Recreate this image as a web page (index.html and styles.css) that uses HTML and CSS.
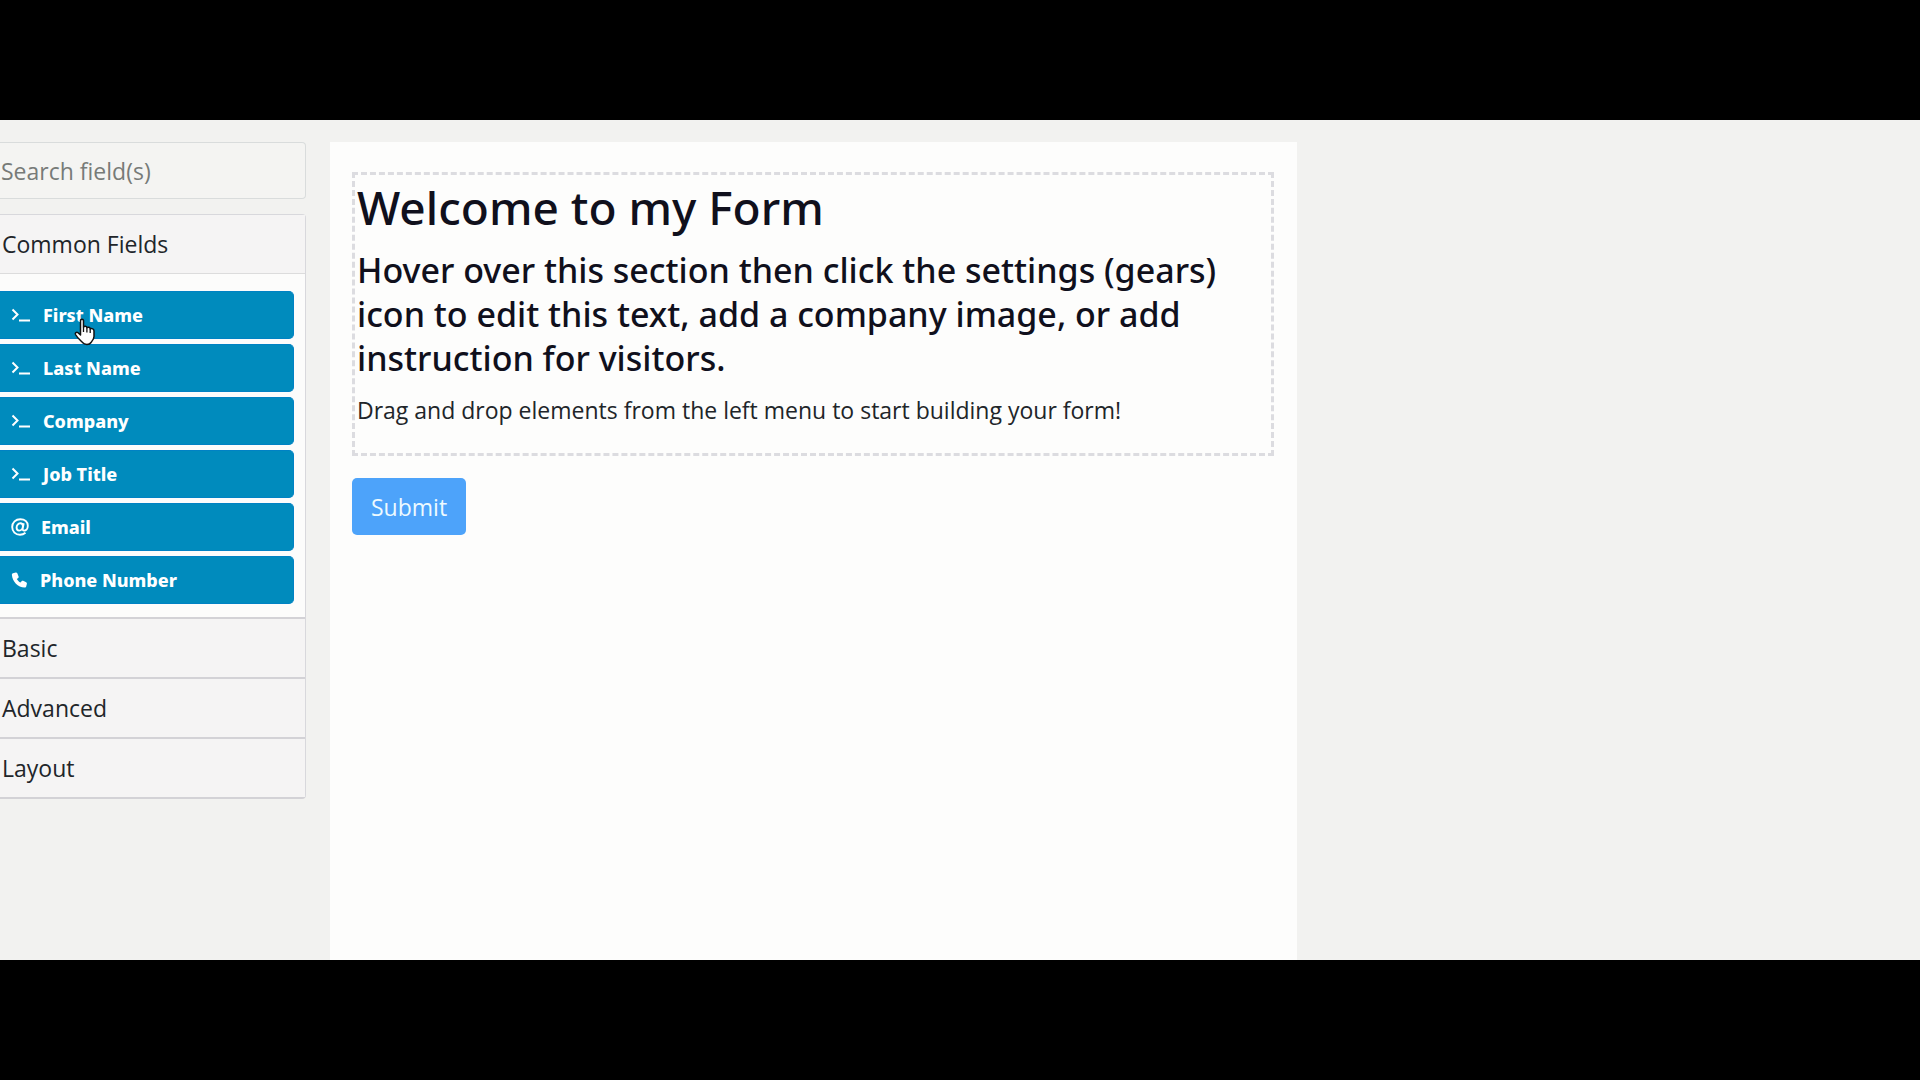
FILE: index.html
```html
<!DOCTYPE html>
<html lang="en">
<head>
<meta charset="utf-8">
<meta name="viewport" content="width=device-width, initial-scale=1">
<title>Form Builder</title>
<link rel="stylesheet" href="styles.css">
</head>
<body>
<svg class="sprite" aria-hidden="true">
  <symbol id="terminal" viewBox="0 0 20 16">
    <path d="M1.500 2.500L6.500 7.500L1.500 12.500M8 13.500H19" fill="none" stroke="currentColor" stroke-width="2"/>
  </symbol>
  <symbol id="at" viewBox="0 0 18 18">
    <path d="M14.500 14.800C13 16 11.200 16.800 9 16.800C4.500 16.800 1.200 13.500 1.200 9C1.200 4.500 4.700 1.200 9.300 1.200C13.800 1.200 16.800 4 16.800 7.800C16.800 10.800 15 12.600 13.200 12.600C11.900 12.600 11.400 11.800 11.700 10.500L12.700 5.200M11.900 8C11.900 6.300 10.900 5.300 9.300 5.300C7.200 5.300 5.600 7.200 5.600 9.600C5.600 11.500 6.600 12.600 8.100 12.600C10.300 12.600 11.900 10.400 11.900 8Z" fill="none" stroke="currentColor" stroke-width="1.900"/>
  </symbol>
  <symbol id="phone" viewBox="0 0 16 16">
    <path fill="currentColor" d="M4.300.6L1.500 1.300C.8 1.500.3 2.100.4 2.900C1 9.700 6.300 15 13.100 15.600c.8.1 1.400-.4 1.600-1.100l.7-2.800c.1-.6-.1-1.200-.7-1.500l-3.100-1.400c-.6-.2-1.100-.1-1.500.4L9 10.600C7.300 9.700 6.200 8.600 5.300 7l1.400-1.100c.5-.4.6-.9.4-1.500L5.800 1.300C5.500.8 4.900.5 4.300.6z"/>
  </symbol>
</svg>

<div class="stage">
  <aside class="sidebar">
    <input class="search" type="search" placeholder="Search field(s)" aria-label="Search field(s)">
    <div class="accordion">
      <section class="group">
        <button class="group-header" type="button" aria-expanded="true">Common Fields</button>
        <div class="group-body">
          <button class="field" type="button"><svg class="icon icon-wide"><use href="#terminal"/></svg>First Name</button>
          <button class="field" type="button"><svg class="icon icon-wide"><use href="#terminal"/></svg>Last Name</button>
          <button class="field" type="button"><svg class="icon icon-wide"><use href="#terminal"/></svg>Company</button>
          <button class="field" type="button"><svg class="icon icon-wide"><use href="#terminal"/></svg>Job Title</button>
          <button class="field" type="button"><svg class="icon icon-at"><use href="#at"/></svg>Email</button>
          <button class="field" type="button"><svg class="icon"><use href="#phone"/></svg>Phone Number</button>
        </div>
      </section>
      <section class="group"><button class="group-header" type="button" aria-expanded="false">Basic</button></section>
      <section class="group"><button class="group-header" type="button" aria-expanded="false">Advanced</button></section>
      <section class="group"><button class="group-header" type="button" aria-expanded="false">Layout</button></section>
    </div>
    <svg class="pointer" viewBox="0 0 22 28" aria-hidden="true">
      <path d="M6.500 2.500C6.500.9 9.500.9 9.500 2.500V9C10.500 7.600 12.700 8 12.900 9.700C14.200 8.700 16 9.300 16.200 10.800C17.800 10.200 20 11 20 13V18.500C20 21 18.500 22.500 17 24.500C15.500 27 10.500 27 8.500 24.500C6 22 3.500 20 1.500 16.500C.7 15 2.500 13.600 4 14.700L6.500 17Z" fill="#fff" stroke="#111" stroke-width="1.500" stroke-linejoin="round"/>
      <path d="M9.500 9V14M12.900 10V14.500M16.200 11V15" fill="none" stroke="#111" stroke-width="1.300"/>
    </svg>
  </aside>

  <main class="sheet">
    <section class="intro">
      <h1>Welcome to my Form</h1>
      <h3>Hover over this section then click the settings (gears) icon to edit this text, add a company image, or add instruction for visitors.</h3>
      <p>Drag and drop elements from the left menu to start building your form!</p>
    </section>
    <button class="submit" type="submit">Submit</button>
  </main>
</div>
</body>
</html>
```
FILE: styles.css
```css
* {
  box-sizing: border-box;
}

body {
  margin: 0;
  min-height: 100vh;
  display: grid;
  grid-template-rows: 1fr 7fr 1fr;
  background: #000;
  color: #212529;
  font-family: "Open Sans", "Noto Sans", sans-serif;
  font-size: 23px;
  line-height: 36px;
}

button,
input {
  font: inherit;
  color: inherit;
}

.sprite {
  position: absolute;
  width: 0;
  height: 0;
}

.stage {
  grid-row: 2;
  display: grid;
  grid-template-columns: 306fr 967fr 599fr;
  gap: 24px;
  padding-top: 22px;
  background: #f2f2f0;
}

.sidebar {
  position: relative;
}

.search {
  display: block;
  width: 100%;
  height: 57px;
  margin: 0 0 15px;
  padding: 0 1px;
  appearance: none;
  background: #f4f4f2;
  border: 1px solid #d9dcdc;
  border-left: 0;
  border-radius: 0 4px 4px 0;
}

.search::placeholder {
  color: #777b78;
  opacity: 1;
}

.accordion {
  border: 1px solid #d8d8dc;
  border-bottom: 2px solid #d3d2d6;
  border-left: 0;
  border-radius: 0 4px 4px 0;
}

.group + .group {
  border-top: 2px solid #d3d2d6;
}

.group-header {
  display: block;
  width: 100%;
  height: 58px;
  padding: 0 2px;
  border: 0;
  background: #f5f4f4;
  text-align: left;
}

.group-body {
  display: grid;
  gap: 5px;
  padding: 17px 11px 13px 0;
  border-top: 1px solid #dcdcdc;
  background: #fcfcfb;
}

.field {
  display: flex;
  align-items: center;
  gap: 12px;
  height: 48px;
  padding: 0 11px;
  border: 1px solid #0082c4;
  border-left: 0;
  border-radius: 0 5px 5px 0;
  background: #008bbd;
  color: #fff;
  font-family: "Noto Sans", "Open Sans", sans-serif;
  font-size: 18px;
  font-weight: 800;
}

.icon {
  width: 17px;
  height: 16px;
}

.icon-wide {
  width: 20px;
}

.icon-at {
  width: 18px;
  height: 18px;
}

.pointer {
  position: absolute;
  left: 73px;
  top: 176px;
  width: 24px;
  height: 28px;
}

.sheet {
  padding: 30px 23px 24px 22px;
  background: #fdfdfc;
}

.intro {
  margin-bottom: 22px;
  padding: 3px 2px 25px;
  border: 3px dashed #dcdce0;
}

h1,
h3,
p {
  margin: 0;
}

h1,
h3 {
  color: #10101c;
  font-family: "Noto Sans", "Open Sans", sans-serif;
  font-weight: 500;
}

h1 {
  margin-bottom: 12px;
  font-size: 46px;
  line-height: 58px;
}

h3 {
  margin-bottom: 12px;
  font-size: 34px;
  line-height: 44px;
}

.submit {
  height: 57px;
  padding: 0 19px;
  border: 0;
  border-radius: 5px;
  background: #4da3fa;
  color: #eefaff;
}
```
